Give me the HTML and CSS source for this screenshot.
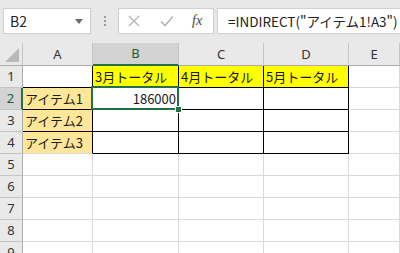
FILE: index.html
```html
<!DOCTYPE html>
<html lang="ja">
<head>
    <meta charset="UTF-8">
    <title>Sheet1</title>
    <link rel="stylesheet" href="styles.css">
</head>
<body>
    <div class="toolbar">
        <div class="namebox">
            <span>B2</span>
            <svg class="arrow" width="8" height="5" viewBox="0 0 8 5"><path d="M0 0h8L4 5z" fill="#6a6a6a"/></svg>
        </div>
        <div class="dots"><i></i><i></i><i></i></div>
        <div class="fxbox">
            <svg width="12" height="12" viewBox="0 0 12 12"><path d="M1 1l10 10M11 1L1 11" stroke="#b4b4b4" stroke-width="1.4" fill="none"/></svg>
            <svg width="14" height="12" viewBox="0 0 14 12"><path d="M1 6.5l4 4L13 1.5" stroke="#b4b4b4" stroke-width="1.6" fill="none"/></svg>
            <span class="fx">fx</span>
        </div>
        <div class="formula">=INDIRECT("アイテム1!A3")</div>
    </div>

    <div class="sheet">
        <div class="c hd corner"><svg width="14" height="14" viewBox="0 0 14 14"><path d="M14 0V14H0z" fill="#b9b9b9"/></svg></div>
        <div class="c hd">A</div>
        <div class="c hd sel-col">B</div>
        <div class="c hd">C</div>
        <div class="c hd">D</div>
        <div class="c hd">E</div>

        <div class="c rh">1</div>
        <div class="c br bb"></div>
        <div class="c yellow br bb">3月トータル</div>
        <div class="c yellow br bb">4月トータル</div>
        <div class="c yellow br bb">5月トータル</div>
        <div class="c"></div>

        <div class="c rh sel-row">2</div>
        <div class="c orange br bb">アイテム1</div>
        <div class="c br bb num active">186000</div>
        <div class="c br bb"></div>
        <div class="c br bb"></div>
        <div class="c"></div>

        <div class="c rh">3</div>
        <div class="c orange br bb">アイテム2</div>
        <div class="c br bb"></div>
        <div class="c br bb"></div>
        <div class="c br bb"></div>
        <div class="c"></div>

        <div class="c rh">4</div>
        <div class="c orange br">アイテム3</div>
        <div class="c br bb"></div>
        <div class="c br bb"></div>
        <div class="c br bb"></div>
        <div class="c"></div>

        <div class="c rh">5</div>
        <div class="c"></div><div class="c"></div><div class="c"></div><div class="c"></div><div class="c"></div>
        <div class="c rh">6</div>
        <div class="c"></div><div class="c"></div><div class="c"></div><div class="c"></div><div class="c"></div>
        <div class="c rh">7</div>
        <div class="c"></div><div class="c"></div><div class="c"></div><div class="c"></div><div class="c"></div>
        <div class="c rh">8</div>
        <div class="c"></div><div class="c"></div><div class="c"></div><div class="c"></div><div class="c"></div>
        <div class="c rh">9</div>
        <div class="c"></div><div class="c"></div><div class="c"></div><div class="c"></div><div class="c"></div>
    </div>
</body>
</html>
```

FILE: styles.css
```css
body {
    margin: 0;
    width: 400px;
    height: 253px;
    overflow: hidden;
    background-color: #fff;
    font-family: "Noto Sans CJK JP", "Noto Sans", sans-serif;
    color: #1a1a1a;
}

/* formula bar */
.toolbar {
    height: 43px;
    background-color: #e8e8e8;
    display: flex;
    align-items: flex-start;
    padding-top: 8px;
    box-sizing: border-box;
}

.namebox {
    margin-left: 3px;
    width: 88px;
    height: 26px;
    box-sizing: border-box;
    background-color: #fff;
    border: 1px solid #d0d0d0;
    display: flex;
    align-items: center;
    justify-content: space-between;
    padding: 0 7px 0 6px;
    font-size: 14px;
    color: #222;
}

.dots {
    width: 27px;
    height: 26px;
    display: flex;
    flex-direction: column;
    align-items: center;
    justify-content: center;
    gap: 2px;
}

.dots i {
    width: 2px;
    height: 2px;
    background-color: #9a9a9a;
}

.fxbox {
    width: 96px;
    height: 26px;
    box-sizing: border-box;
    background-color: #fff;
    border: 1px solid #d0d0d0;
    display: flex;
    align-items: center;
    padding-left: 9px;
    gap: 20px;
}

.fx {
    font-family: "Liberation Serif", serif;
    font-style: italic;
    font-size: 14px;
    color: #444;
    margin-left: -2px;
}

.formula {
    margin-left: 3px;
    flex: 1;
    min-width: 0;
    height: 26px;
    box-sizing: border-box;
    background-color: #fff;
    border: 1px solid #d0d0d0;
    border-right: none;
    padding-left: 10px;
    font-size: 13.5px;
    line-height: 24px;
    color: #222;
    white-space: nowrap;
    overflow: hidden;
}

/* grid */
.sheet {
    display: grid;
    grid-template-columns: 23px 70px 86px 85px 85px 1fr;
    grid-template-rows: 23px repeat(9, 22px);
}

.c {
    border-right: 1px solid #d9d9d9;
    border-bottom: 1px solid #d9d9d9;
    font-size: 13px;
    line-height: 21px;
    padding: 0 2px;
    white-space: nowrap;
    overflow: hidden;
    position: relative;
}

.hd {
    background-color: #e9e9e9;
    border-right-color: #c4c4c4;
    border-bottom-color: #acacac;
    text-align: center;
    color: #333;
    font-family: "Noto Sans", sans-serif;
    line-height: 22px;
}

.corner {
    display: flex;
    align-items: flex-end;
    justify-content: flex-end;
    padding: 0 3px 3px 0;
}

.rh {
    background-color: #e9e9e9;
    border-right-color: #acacac;
    border-bottom-color: #c4c4c4;
    text-align: center;
    color: #333;
    font-family: "Noto Sans", sans-serif;
    padding: 0;
}

.sel-col {
    background-color: #d3d3d3;
    border-bottom: 2px solid #217346;
    line-height: 21px;
    color: #1d5c38;
}

.sel-row {
    background-color: #d3d3d3;
    border-right: 2px solid #217346;
    color: #1d5c38;
}

.yellow {
    background-color: #ffff00;
}

.orange {
    background-color: #ffe699;
}

.br {
    border-right-color: #000;
}

.bb {
    border-bottom-color: #000;
}

.num {
    text-align: right;
}

.active {
    overflow: visible;
}

.active::after {
    content: "";
    position: absolute;
    left: -2px;
    top: -2px;
    right: -1px;
    bottom: -1px;
    border: 2px solid #217346;
}

.active::before {
    content: "";
    position: absolute;
    right: -4px;
    bottom: -4px;
    width: 5px;
    height: 5px;
    background-color: #217346;
    border: 1px solid #fff;
    z-index: 2;
}
```
